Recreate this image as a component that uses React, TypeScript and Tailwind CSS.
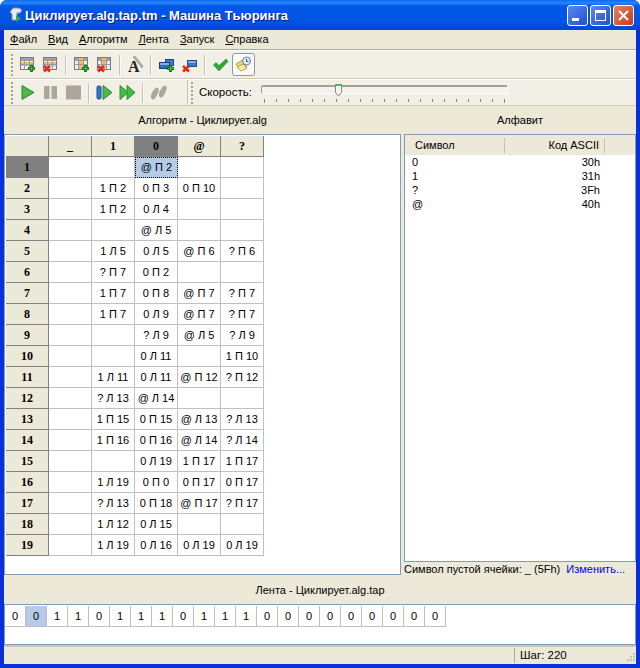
const columns = ["_", "1", "0", "@", "?"];

const rows = [
  ["", "", "@ П 2", "", ""],
  ["", "1 П 2", "0 П 3", "0 П 10", ""],
  ["", "1 П 2", "0 Л 4", "", ""],
  ["", "", "@ Л 5", "", ""],
  ["", "1 Л 5", "0 Л 5", "@ П 6", "? П 6"],
  ["", "? П 7", "0 П 2", "", ""],
  ["", "1 П 7", "0 П 8", "@ П 7", "? П 7"],
  ["", "1 П 7", "0 Л 9", "@ П 7", "? П 7"],
  ["", "", "? Л 9", "@ Л 5", "? Л 9"],
  ["", "", "0 Л 11", "", "1 П 10"],
  ["", "1 Л 11", "0 Л 11", "@ П 12", "? П 12"],
  ["", "? Л 13", "@ Л 14", "", ""],
  ["", "1 П 15", "0 П 15", "@ Л 13", "? Л 13"],
  ["", "1 П 16", "0 П 16", "@ Л 14", "? Л 14"],
  ["", "", "0 Л 19", "1 П 17", "1 П 17"],
  ["", "1 Л 19", "0 П 0", "0 П 17", "0 П 17"],
  ["", "? Л 13", "0 П 18", "@ П 17", "? П 17"],
  ["", "1 Л 12", "0 Л 15", "", ""],
  ["", "1 Л 19", "0 Л 16", "0 Л 19", "0 Л 19"],
];

const tape = "001101110111000000000".split("");

const alphabet = [
  ["0", "30h"],
  ["1", "31h"],
  ["?", "3Fh"],
  ["@", "40h"],
];

const Grid = ({ orange, columnFill }: { orange?: boolean; columnFill?: boolean }) => (
  <g>
    <rect x="1.5" y="1.5" width="13" height="12" fill="#eeeef6" stroke="#77777f" />
    <rect x="2" y="2" width="12" height="2" fill="#a0a0a8" />
    {orange && <rect x="2" y="6" width="12" height="4" fill="#f7b95a" />}
    {columnFill && <rect x="6" y="2" width="4" height="11" fill="#f7b95a" />}
    <path d="M1.5 4.5h13M1.5 8.5h13M5.5 1.5v12M10.5 1.5v12" stroke="#9a9aa2" fill="none" />
  </g>
);

const Plus = ({ x, y }: { x: number; y: number }) => (
  <path
    transform={`translate(${x} ${y})`}
    d="M2.5 0.5h2v2h2v2h-2v2h-2v-2h-2v-2h2z"
    fill="#35c23a"
    stroke="#0b6b12"
  />
);

const Cross = ({ x, y }: { x: number; y: number }) => (
  <path
    transform={`translate(${x} ${y})`}
    d="M1 1l6 5.5M7 1l-6 5.5"
    stroke="#d8301c"
    strokeWidth="2.6"
    fill="none"
  />
);

const Icon = ({ children }: { children: React.ReactNode }) => (
  <span className="flex h-[23px] w-[23px] items-center justify-center">
    <svg width="17" height="17" viewBox="0 0 17 17">
      {children}
    </svg>
  </span>
);

const Sep = () => <span className="mx-[3px] h-[20px] w-[2px] border-l border-[#c5c2b0] bg-white/70" />;

const Gripper = ({ className }: { className: string }) => (
  <span className={`flex flex-col gap-[2px] ${className}`}>
    {[0, 1, 2, 3, 4, 5].map((i) => (
      <span key={i} className="h-[2px] w-[2px] bg-[#a8a594]" />
    ))}
  </span>
);

const Caption = ({ children, className }: { children: React.ReactNode; className: string }) => (
  <div className={`flex items-center justify-center ${className}`}>{children}</div>
);

const u = (letter: string, rest: string) => (
  <span>
    <span className="underline">{letter}</span>
    {rest}
  </span>
);

export default function App() {
  return (
    <div className="flex h-[668px] w-[640px] flex-col overflow-hidden rounded-t-[7px] bg-[#0831d9] font-['Liberation_Sans',sans-serif] text-[11px] leading-none text-black">
      <div className="flex h-[30px] shrink-0 items-center bg-[linear-gradient(to_bottom,#0a6af0_0px,#2a85f8_3px,#0058e6_6px,#0054e3_22px,#0346cf_30px)] pl-[8px] pr-[6px]">
        <svg width="16" height="18" viewBox="0 0 16 18" className="mr-[1px]">
          <path d="M5 2h6l3 2-2 3H9v7H4V8L2 6z" fill="#e8e8ee" stroke="#8a8fa0" />
          <path d="M8 9l5 3.5L8 16z" fill="#3aa83a" />
        </svg>
        <span className="text-[13px] font-bold text-white [text-shadow:1px_1px_0_#0f1089]">
          Циклирует.alg.tap.tm - Машина Тьюринга
        </span>
        <span className="ml-auto flex gap-[2px]">
          <span className="flex h-[21px] w-[21px] items-end rounded-[3px] border border-white bg-gradient-to-br from-[#5a8af0] to-[#1f4fd0] pb-[4px] pl-[4px]">
            <span className="h-[3px] w-[7px] bg-white" />
          </span>
          <span className="flex h-[21px] w-[21px] items-center justify-center rounded-[3px] border border-white bg-gradient-to-br from-[#5a8af0] to-[#1f4fd0]">
            <span className="h-[11px] w-[11px] border border-t-[3px] border-white" />
          </span>
          <span className="flex h-[21px] w-[21px] items-center justify-center rounded-[3px] border border-white bg-gradient-to-br from-[#e8815f] to-[#c8361a]">
            <svg width="11" height="11" viewBox="0 0 11 11">
              <path d="M1 1l9 9M10 1l-9 9" stroke="white" strokeWidth="2" />
            </svg>
          </span>
        </span>
      </div>

      <div className="mx-[4px] mb-[4px] flex min-h-0 flex-1 flex-col bg-[#ece9d8]">
        <div className="flex h-[20px] shrink-0 items-center gap-[11px] border-b border-[#aca899] pl-[6px]">
          {u("Ф", "айл")}
          {u("В", "ид")}
          {u("А", "лгоритм")}
          {u("Л", "ента")}
          {u("З", "апуск")}
          {u("С", "правка")}
        </div>

        <div className="flex h-[29px] shrink-0 items-center border-t border-b border-t-white border-b-[#d0ccb8] bg-[#f1efe6]">
          <Gripper className="mr-[3px] ml-[7px]" />
          <Icon>
            <Grid orange />
            <Plus x={9} y={9} />
          </Icon>
          <Icon>
            <Grid orange />
            <Cross x={1} y={9} />
          </Icon>
          <Sep />
          <Icon>
            <Grid columnFill />
            <Plus x={9} y={9} />
          </Icon>
          <Icon>
            <Grid columnFill />
            <Cross x={1} y={9} />
          </Icon>
          <Sep />
          <Icon>
            <text x="1" y="15.5" fontFamily="Liberation Serif" fontWeight="700" fontSize="16" fill="#222">
              A
            </text>
            <path d="M6 1l2-1 8 10-1 2z" fill="#b5b1a0" stroke="#8d8a7c" strokeWidth="0.5" />
          </Icon>
          <Sep />
          <Icon>
            <rect x="7.5" y="3.5" width="8" height="6" fill="#3a7ac8" stroke="#1c4a8c" />
            <rect x="1.5" y="6.5" width="10" height="6" fill="#2f6bc0" stroke="#173f80" />
            <rect x="2" y="7" width="9" height="2" fill="#7fb0e8" />
            <Plus x={9} y={9} />
          </Icon>
          <Icon>
            <rect x="6.5" y="4.5" width="9" height="6" fill="#3a7ac8" stroke="#1c4a8c" />
            <rect x="7" y="5" width="8" height="2" fill="#7fb0e8" />
            <Cross x={1} y={9} />
          </Icon>
          <Sep />
          <Icon>
            <path d="M1.5 9l2.5-2.5 3 3 7-6.5 2 2.5-9 9.5z" fill="#2fa53a" stroke="#1d7d2a" strokeWidth="0.5" />
          </Icon>
          <span className="flex h-[23px] w-[23px] items-center justify-center rounded-[3px] border border-[#7f9db9] bg-[#fbfaf5]">
            <svg width="17" height="17" viewBox="0 0 17 17">
              <path d="M1 8l7-4 4 6-7 4z" fill="#f4d77a" stroke="#b39a3e" />
              <path d="M2 11l6-3 4 4-6 3z" fill="#fbe9a5" stroke="#b39a3e" />
              <circle cx="11.5" cy="5" r="4" fill="#dfe8f6" stroke="#5f7fb0" />
              <path d="M11.5 3v2.5h2" stroke="#34507e" fill="none" />
            </svg>
          </span>
        </div>

        <div className="flex h-[27px] shrink-0 items-center border-t border-b border-t-white border-b-[#d0ccb8] bg-[#f1efe6]">
          <Gripper className="mr-[3px] ml-[7px]" />
          <Icon>
            <path d="M3 1.5l12 7-12 7z" fill="#4cb848" stroke="#2d8a34" />
          </Icon>
          <Icon>
            <rect x="2" y="2" width="5.5" height="13" fill="#aca899" />
            <rect x="9.5" y="2" width="5.5" height="13" fill="#aca899" />
          </Icon>
          <Icon>
            <rect x="1" y="1.5" width="15" height="14" fill="#aca899" />
          </Icon>
          <Sep />
          <Icon>
            <rect x="1" y="2" width="4" height="13" rx="1.5" fill="#2f7ad8" stroke="#1c4a8c" />
            <path d="M7 1.5l9 7-9 7z" fill="#4cb848" stroke="#2d8a34" />
          </Icon>
          <Icon>
            <path d="M1 1.5l8 7-8 7z" fill="#3fc045" stroke="#2d8a34" />
            <path d="M8 1.5l8 7-8 7z" fill="#3fc045" stroke="#2d8a34" />
          </Icon>
          <Sep />
          <Icon>
            <path d="M2 15c-2-1-1-5 1-8s3-4 5-3 0 6-2 9-3 3-4 2zM10 13c-2-1-1-5 1-8s3-4 5-3 0 6-2 9-3 3-4 2z" fill="#aca899" />
          </Icon>
          <span className="ml-[17px] h-[25px] w-[2px] border-l border-[#c5c2b0] bg-white/70" />
          <Gripper className="ml-[2px]" />
          <span className="ml-[6px] text-[11.5px]">Скорость:</span>
          <div className="ml-[9px] flex h-[25px] w-[247px] flex-col pt-[5px]">
            <div className="relative h-[9px] shrink-0 rounded-[2px] border-t-2 border-r border-b border-l border-t-[#a3a091] border-r-white border-b-white border-l-[#a3a091] bg-[#f3f1ea]">
              <svg width="7" height="13" viewBox="0 0 7 13" className="absolute left-[73px] top-[-3px]">
                <path d="M0.5 0.5h6v8l-3 3.5-3-3.5z" fill="#f5f4ee" stroke="#7b8a80" />
                <path d="M0.5 1h6" stroke="#3fc04f" strokeWidth="2" />
              </svg>
            </div>
            <div className="mt-[5px] flex justify-between px-[3px]">
              {Array.from({ length: 21 }).map((_, i) => (
                <span key={i} className={`w-px bg-[#8d8a7c] ${i === 0 || i === 20 ? "h-[4px]" : "h-[3px]"}`} />
              ))}
            </div>
          </div>
        </div>

        <div className="flex min-h-0 flex-1">
          <div className="flex w-[397px] shrink-0 flex-col">
            <Caption className="h-[28px] shrink-0">Алгоритм - Циклирует.alg</Caption>
            <div className="h-[441px] shrink-0 border border-[#7f9db9] bg-white p-[1px] pr-0">
              <div className="flex h-[21px]">
                <span className="h-[21px] w-[43px] border-r border-b border-[#808080] bg-[#ece9d8]" />
                {columns.map((c) => (
                  <span
                    key={c}
                    className={`flex h-[21px] w-[43px] items-center justify-center border-r border-b border-[#808080] font-['Liberation_Serif',serif] text-[12px] font-bold ${
                      c === "0" ? "bg-[#808080]" : "bg-[#ece9d8]"
                    }`}
                  >
                    {c}
                  </span>
                ))}
              </div>
              {rows.map((row, r) => (
                <div key={r} className="flex h-[21px]">
                  <span
                    className={`flex h-[21px] w-[43px] items-center justify-center border-r border-b border-[#808080] font-['Liberation_Serif',serif] text-[12px] font-bold ${
                      r === 0 ? "bg-[#808080]" : "bg-[#ece9d8]"
                    }`}
                  >
                    {r + 1}
                  </span>
                  {row.map((cell, c) =>
                    r === 0 && c === 2 ? (
                      <span
                        key={c}
                        className="flex h-[21px] w-[43px] items-center justify-center border border-dotted border-black bg-[#b5cbe8]"
                      >
                        {cell}
                      </span>
                    ) : (
                      <span
                        key={c}
                        className="flex h-[21px] w-[43px] items-center justify-center border-r border-b border-[#c0c0c0]"
                      >
                        {cell}
                      </span>
                    ),
                  )}
                </div>
              ))}
            </div>
          </div>

          <div className="ml-[3px] flex min-w-0 flex-1 flex-col">
            <Caption className="h-[28px] shrink-0">Алфавит</Caption>
            <div className="h-[428px] shrink-0 border border-[#7f9db9] bg-white">
              <div className="flex h-[20px] items-center bg-[#ece9d8]">
                <span className="w-[100px] border-r border-[#c5c2b0] py-[2px] pl-[10px]">Символ</span>
                <span className="w-[100px] border-r border-[#c5c2b0] py-[2px] pr-[5px] text-right">Код ASCII</span>
              </div>
              {alphabet.map(([s, code]) => (
                <div key={s} className="flex h-[14px] w-[200px] items-center justify-between pl-[7px] pr-[5px]">
                  <span>{s}</span>
                  <span>{code}</span>
                </div>
              ))}
            </div>
            <div className="flex h-[15px] shrink-0 items-center">
              <span>Символ пустой ячейки: _ (5Fh)</span>
              <span className="ml-[6px] text-[#0000ff]">Изменить...</span>
            </div>
          </div>
        </div>

        <Caption className="h-[27px] shrink-0">Лента - Циклирует.alg.tap</Caption>

        <div className="h-[41px] shrink-0 border border-[#7f9db9] bg-white pt-[1px]">
          <div className="flex">
            {tape.map((v, i) => (
              <span
                key={i}
                className={`flex h-[21px] w-[21px] items-center justify-center border-r border-b border-[#c0c0c0] ${
                  i === 1 ? "bg-[#b5cbe8]" : ""
                }`}
              >
                {v}
              </span>
            ))}
          </div>
        </div>

        <div className="flex h-[19px] shrink-0 items-center border-t-2 border-[#c8c5b4]">
          <span className="ml-auto flex h-[15px] w-[122px] items-center border-l border-[#aca899] pl-[5px] text-[11.5px]">
            Шаг: 220
          </span>
          <svg width="11" height="11" viewBox="0 0 11 11" className="absolute left-[625px] top-[652px]">
            <path d="M8 1h2v2H8zM5 4h2v2H5zM8 4h2v2H8zM2 7h2v2H2zM5 7h2v2H5zM8 7h2v2H8z" fill="#c5c2b0" />
          </svg>
        </div>
      </div>
    </div>
  );
}
